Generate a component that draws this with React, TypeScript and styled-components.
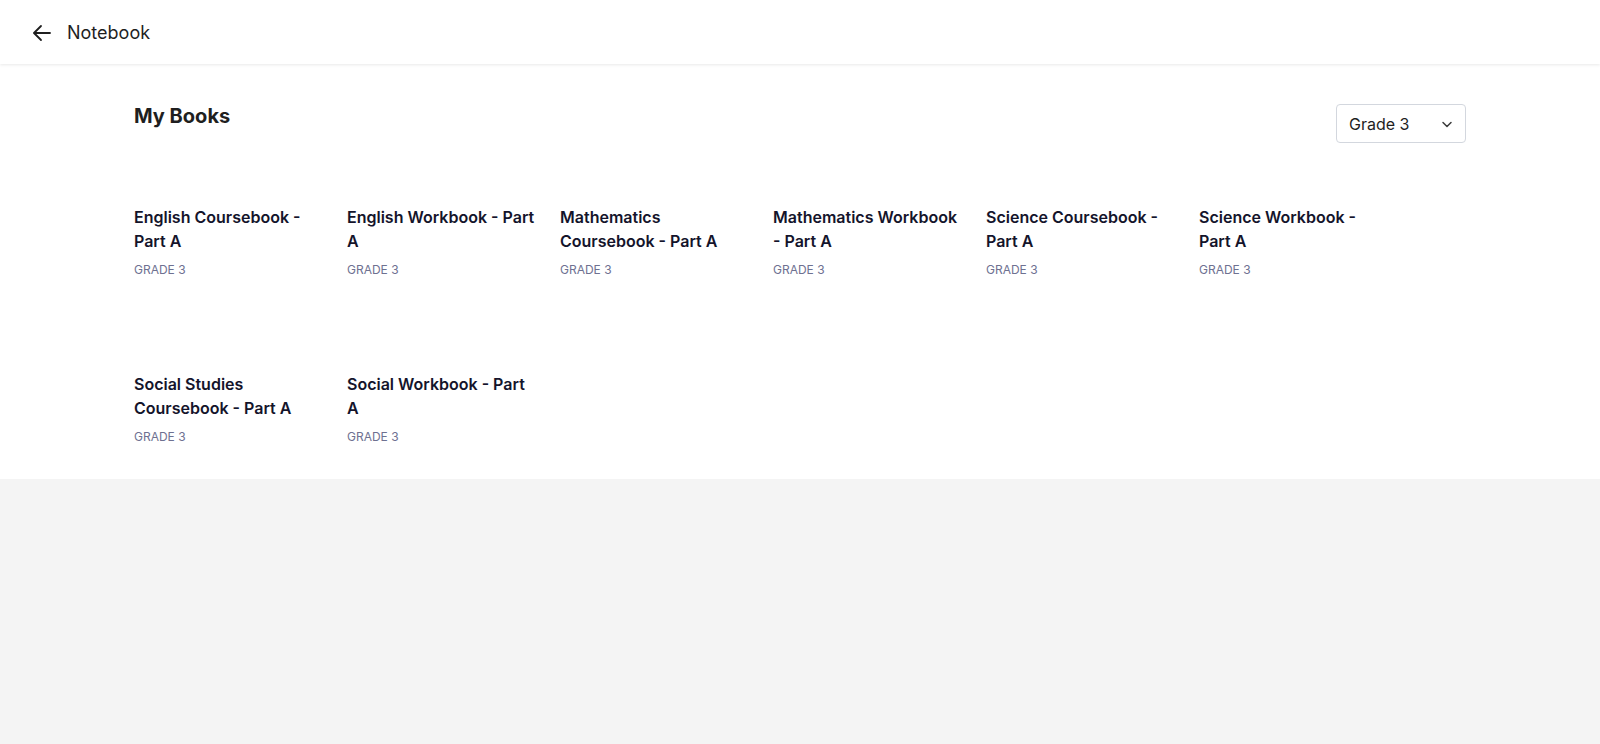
import React from "react";
import styled, { createGlobalStyle } from "styled-components";

const GlobalStyle = createGlobalStyle`
  html, body { margin: 0; padding: 0; }
  body {
    background: #f4f4f4;
    font-family: Inter, "Noto Sans", sans-serif;
    -webkit-font-smoothing: antialiased;
  }
  * { box-sizing: border-box; }
`;

const TopBar = styled.header`
  height: 64px;
  background: #ffffff;
  display: flex;
  align-items: center;
  padding: 2px 0 0 30px;
  gap: 13px;
  box-shadow: 0 1px 3px rgba(0, 0, 0, 0.09);
  position: relative;
  z-index: 1;
`;

const BackButton = styled.button`
  width: 24px;
  height: 24px;
  padding: 0;
  border: none;
  background: none;
  display: flex;
  align-items: center;
  justify-content: center;
  color: #1f1f1f;
  cursor: pointer;
`;

const TopTitle = styled.h1`
  margin: 0;
  font-size: 18px;
  font-weight: 400;
  color: #1f1f1f;
  line-height: 24px;
`;

const Content = styled.main`
  background: #ffffff;
  padding: 40px 0 34px;
`;

const Container = styled.div`
  max-width: 1332px;
  margin: 0 auto;
`;

const HeadRow = styled.div`
  display: flex;
  justify-content: space-between;
  align-items: flex-start;
`;

const PageTitle = styled.h2`
  margin: 0;
  font-size: 20px;
  line-height: 24px;
  font-weight: 700;
  color: #1f1f1f;
`;

const Select = styled.button`
  width: 130px;
  height: 39px;
  border: 1px solid #d3d7de;
  border-radius: 4px;
  background: #ffffff;
  display: flex;
  align-items: center;
  justify-content: space-between;
  padding: 0 9px 0 12px;
  font-family: inherit;
  font-size: 16px;
  color: #1f1f1f;
  cursor: pointer;
`;

const Grid = styled.div`
  margin-top: 62px;
  display: grid;
  grid-template-columns: repeat(6, 190px);
  column-gap: 23px;
  row-gap: 94px;
`;

const Card = styled.div`
  display: flex;
  flex-direction: column;
`;

const BookTitle = styled.div`
  font-size: 16px;
  line-height: 24px;
  font-weight: 600;
  color: #14142b;
`;

const Grade = styled.div`
  margin-top: 9px;
  font-size: 12px;
  line-height: 16px;
  color: #6e7191;
  text-transform: uppercase;
`;

const books = [
  "English Coursebook - Part A",
  "English Workbook - Part A",
  "Mathematics Coursebook - Part A",
  "Mathematics Workbook - Part A",
  "Science Coursebook - Part A",
  "Science Workbook - Part A",
  "Social Studies Coursebook - Part A",
  "Social Workbook - Part A",
];

export default function App() {
  return (
    <>
      <GlobalStyle />
      <TopBar>
        <BackButton aria-label="Back">
          <svg width="24" height="24" viewBox="0 0 24 24" fill="none" stroke="currentColor" strokeWidth="1.8" strokeLinecap="round" strokeLinejoin="round">
            <path d="M20 12H4.5" />
            <path d="M11 5l-7 7 7 7" />
          </svg>
        </BackButton>
        <TopTitle>Notebook</TopTitle>
      </TopBar>
      <Content>
        <Container>
          <HeadRow>
            <PageTitle>My Books</PageTitle>
            <Select>
              <span>Grade 3</span>
              <svg width="18" height="18" viewBox="0 0 18 18" fill="none" stroke="#3a3a3a" strokeWidth="1.5" strokeLinecap="round" strokeLinejoin="round">
                <path d="M5 7.5L9 11.5l4-4" />
              </svg>
            </Select>
          </HeadRow>
          <Grid>
            {books.map((b) => (
              <Card key={b}>
                <BookTitle>{b}</BookTitle>
                <Grade>Grade 3</Grade>
              </Card>
            ))}
          </Grid>
        </Container>
      </Content>
    </>
  );
}
